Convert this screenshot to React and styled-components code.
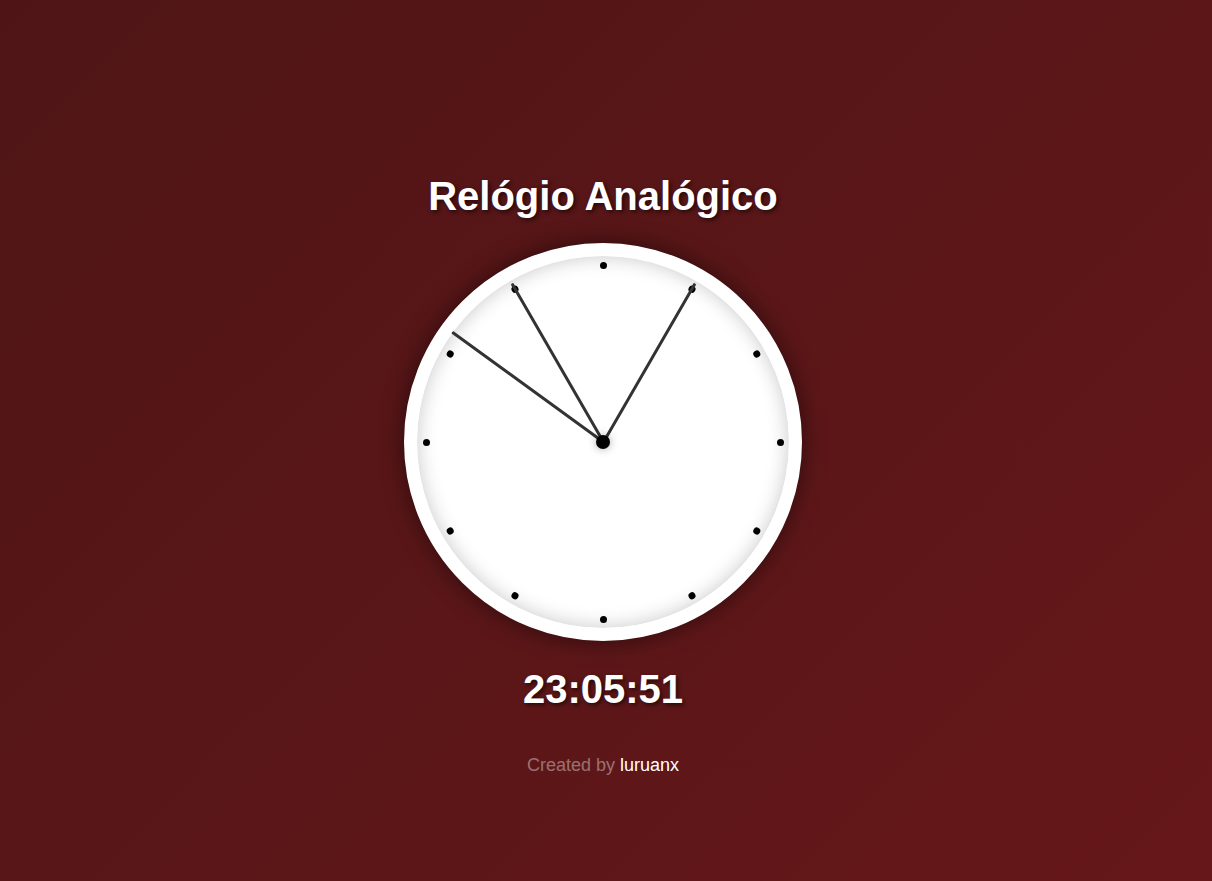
import React from 'react'
import styled, { createGlobalStyle } from 'styled-components'

const GlobalStyle = createGlobalStyle`
  html, body {
    margin: 0;
    padding: 0;
  }
  body {
    font-family: 'Liberation Sans', Arial, sans-serif;
    background: linear-gradient(135deg, #4f1516 0%, #5a1618 50%, #661719 100%);
    min-height: 100vh;
  }
`

const Page = styled.div`
  min-height: 100vh;
  box-sizing: border-box;
  padding: 173px 6px 0 0;
  display: flex;
  flex-direction: column;
  align-items: center;
`

const Title = styled.h1`
  margin: 0 0 24px;
  font-size: 40px;
  line-height: 46px;
  font-weight: 700;
  color: #fff;
  text-shadow: 2px 2px 4px rgba(0, 0, 0, 0.6);
`

// the face: ticks and hands are drawn on it around its centre
const Clock = styled.div`
  position: relative;
  width: 372px;
  height: 372px;
  border: 13px solid #fff;
  border-radius: 50%;
  background: #fff;
  box-shadow: 0 0 22px rgba(0, 0, 0, 0.5), inset 0 0 20px rgba(0, 0, 0, 0.22);
`

const Tick = styled.span`
  position: absolute;
  left: 50%;
  top: 50%;
  width: 7px;
  height: 7px;
  margin: -3.5px 0 0 -3.5px;
  border-radius: 50%;
  background: #000;
  transform: rotate(${p => p.$deg}deg) translateY(-177px);
`

const Hand = styled.span`
  position: absolute;
  left: 50%;
  bottom: 50%;
  width: 3px;
  height: ${p => p.$len}px;
  margin-left: -1.5px;
  background: #333;
  border-radius: 1px;
  transform-origin: 50% 100%;
`

const Pin = styled.span`
  position: absolute;
  left: 50%;
  top: 50%;
  width: 14px;
  height: 14px;
  margin: -7px 0 0 -7px;
  border-radius: 50%;
  background: #000;
  box-shadow: 0 0 8px rgba(0, 0, 0, 0.35);
`

const Time = styled.div`
  margin-top: 25px;
  font-size: 40px;
  line-height: 46px;
  font-weight: 700;
  color: #fff;
  text-shadow: 2px 2px 4px rgba(0, 0, 0, 0.6);
`

const Credit = styled.p`
  margin: 43px 0 0;
  font-size: 18px;
  line-height: 21px;
  color: rgba(255, 255, 255, 0.4);

  a {
    color: #fff;
    text-decoration: none;
  }
`

const NOW = { h: 23, m: 5, s: 51 }

function App() {
  const hourDeg = (NOW.h % 12) * 30
  const minDeg = NOW.m * 6
  const secDeg = NOW.s * 6
  const pad = n => String(n).padStart(2, '0')

  return (
    <>
      <GlobalStyle />
      <Page>
        <Title>Relógio Analógico</Title>
        <Clock>
          {Array.from({ length: 12 }, (_, i) => (
            <Tick key={i} $deg={i * 30} />
          ))}
          <Hand $len={183} style={{ transform: `rotate(${hourDeg}deg)` }} />
          <Hand $len={183} style={{ transform: `rotate(${minDeg}deg)` }} />
          <Hand $len={187} style={{ transform: `rotate(${secDeg}deg)` }} />
          <Pin />
        </Clock>
        <Time>{pad(NOW.h)}:{pad(NOW.m)}:{pad(NOW.s)}</Time>
        <Credit>
          Created by <a href="#">luruanx</a>
        </Credit>
      </Page>
    </>
  )
}

export default App
